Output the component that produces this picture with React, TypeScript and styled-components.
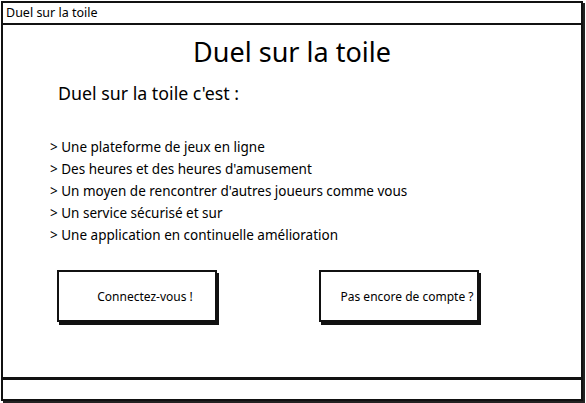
import React from "react";
import styled, { createGlobalStyle } from "styled-components";

const Global = createGlobalStyle`
  html, body { margin: 0; padding: 0; background: #fff; }
  body { font-family: "Noto Sans", "DejaVu Sans", sans-serif; color: #000; }
`;

const Page = styled.div`
  width: 586px;
  height: 403px;
  padding: 1px 0 0 1px;
  box-sizing: border-box;
`;

const Window = styled.div`
  width: 582px;
  height: 400px;
  box-sizing: border-box;
  border: 2px solid #111;
  box-shadow: 2px 2px 0 #222;
  display: flex;
  flex-direction: column;
  background: #fff;
`;

const TitleBar = styled.div`
  height: 22px;
  box-sizing: border-box;
  border-bottom: 2px solid #111;
  padding-left: 3px;
  font-size: 12.5px;
  line-height: 19px;
`;

const Content = styled.div`
  flex: 1;
  display: flex;
  flex-direction: column;
  padding-top: 12px;
`;

const Heading = styled.h1`
  margin: 0;
  font-weight: 400;
  font-size: 27px;
  line-height: 30px;
  text-align: center;
`;

const Sub = styled.h2`
  margin: 16px 0 0 55px;
  font-weight: 400;
  font-size: 17.8px;
  line-height: 20px;
`;

const List = styled.ul`
  list-style: none;
  margin: 33px 0 0 47px;
  padding: 0;
`;

const Item = styled.li`
  font-size: 13.5px;
  line-height: 22px;
`;

const Buttons = styled.div`
  display: flex;
  gap: 102px;
  margin: 24px 0 0 54px;
`;

const Button = styled.button`
  width: 160px;
  height: 52px;
  box-sizing: border-box;
  border: 2px solid #111;
  box-shadow: 2px 3px 0 #111;
  background: #fff;
  font-family: inherit;
  font-size: 12px;
  color: #000;
  padding: 0 0 0 16px;
`;

const StatusBar = styled.div`
  height: 22px;
  box-sizing: border-box;
  border-top: 3px solid #111;
`;

const items = [
  "Une plateforme de jeux en ligne",
  "Des heures et des heures d'amusement",
  "Un moyen de rencontrer d'autres joueurs comme vous",
  "Un service sécurisé et sur",
  "Une application en continuelle amélioration",
];

export default function App() {
  return (
    <Page>
      <Global />
      <Window>
        <TitleBar>Duel sur la toile</TitleBar>
        <Content>
          <Heading>Duel sur la toile</Heading>
          <Sub>Duel sur la toile c'est :</Sub>
          <List>
            {items.map((t) => (
              <Item key={t}>&gt; {t}</Item>
            ))}
          </List>
          <Buttons>
            <Button>Connectez-vous !</Button>
            <Button>Pas encore de compte ?</Button>
          </Buttons>
        </Content>
        <StatusBar />
      </Window>
    </Page>
  );
}
